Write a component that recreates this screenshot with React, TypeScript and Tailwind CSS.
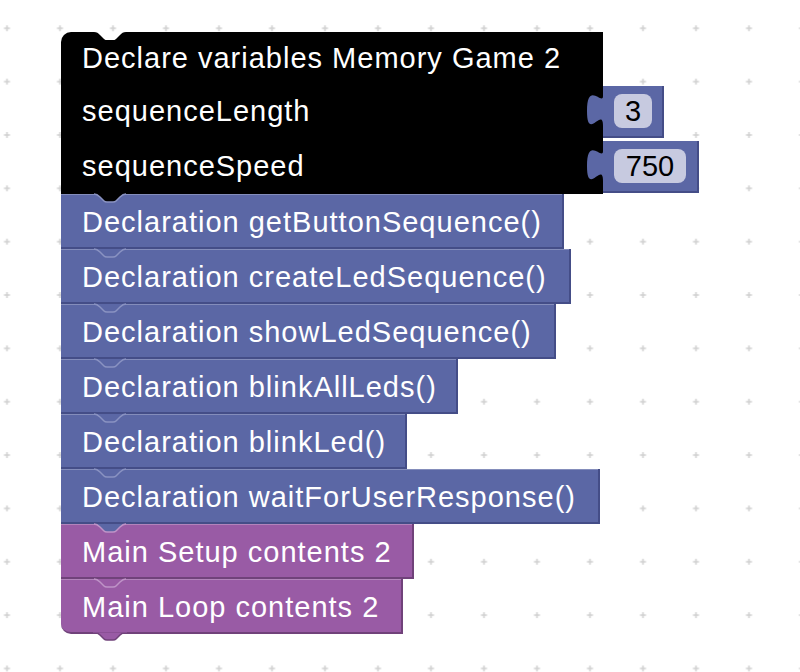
import React from "react";

type Tone = "blue" | "purple";

const TONES: Record<Tone, { box: string; fill: string; notchLine: string }> = {
  blue: {
    box: "bg-[#5b67a5] border-r-2 border-b-2 border-[#444d87]",
    fill: "fill-[#5b67a5]",
    notchLine: "stroke-[#8a93c2]",
  },
  purple: {
    box: "bg-[#995ba5] border-r-2 border-b-2 border-[#70427a]",
    fill: "fill-[#995ba5]",
    notchLine: "stroke-[#bf94c7]",
  },
};

const TAB_PATH =
  "M0,0 C3,0 4,1 6,3 L10,7 C11,8 12,8 13,8 L19,8 C20,8 21,8 22,7 L26,3 C28,1 29,0 32,0 Z";

// the previous block's tab, sitting in this block's top notch
function Notch({ fill, line }: { fill: string; line?: string }) {
  return (
    <svg
      className="absolute left-[33px] top-0 h-[8px] w-[32px] overflow-visible"
      viewBox="0 0 32 8"
    >
      <path d={TAB_PATH} className={fill} />
      {line && (
        <path
          d="M0,0 C3,0 4,1 6,3 L10,7 C11,8 12,8 13,8 L19,8 C20,8 21,8 22,7 L26,3 C28,1 29,0 32,0"
          className={line}
          fill="none"
          strokeWidth="1.5"
        />
      )}
    </svg>
  );
}

function ValueBlock({ value, width, field, top }: { value: string; width: string; field: string; top: string }) {
  return (
    <div
      className={`relative flex h-[52px] items-center self-start pl-[11px] ${top} ${width} ${TONES.blue.box}`}
    >
      <svg
        className="absolute right-full top-[10px] h-[30px] w-[16px] overflow-visible"
        viewBox="0 0 16 30"
      >
        <path
          d="M16,30 c0,-20 -16,16 -16,-15 s16,-5 16,-15 Z"
          className="fill-[#5b67a5]"
        />
      </svg>
      <div
        className={`flex h-[34px] items-center justify-center rounded-[8px] bg-[#c7cae0] text-black tracking-normal ${field}`}
      >
        {value}
      </div>
    </div>
  );
}

const blocks: { label: string; tone: Tone; width: string }[] = [
  { label: "Declaration getButtonSequence()", tone: "blue", width: "w-[503px]" },
  { label: "Declaration createLedSequence()", tone: "blue", width: "w-[510px]" },
  { label: "Declaration showLedSequence()", tone: "blue", width: "w-[495px]" },
  { label: "Declaration blinkAllLeds()", tone: "blue", width: "w-[397px]" },
  { label: "Declaration blinkLed()", tone: "blue", width: "w-[346px]" },
  { label: "Declaration waitForUserResponse()", tone: "blue", width: "w-[539px]" },
  { label: "Main Setup contents 2", tone: "purple", width: "w-[353px]" },
  { label: "Main Loop contents 2", tone: "purple", width: "w-[342px]" },
];

export default function App() {
  return (
    <div className="relative h-[672px] w-[800px] overflow-hidden bg-white font-['Liberation_Sans',Arial,sans-serif] text-[29px] leading-none tracking-[1px]">
      <svg className="absolute inset-0 h-full w-full">
        <defs>
          <pattern id="grid" x="-19.5" y="1.6" width="53" height="53.35" patternUnits="userSpaceOnUse">
            <path d="M23.5,26.7 h6 M26.5,23.7 v6" stroke="#cfcfcf" strokeWidth="1.5" />
          </pattern>
        </defs>
        <rect width="100%" height="100%" fill="url(#grid)" />
      </svg>

      <div className="relative flex flex-col items-start pl-[61px] pt-[32px] text-white">
        {/* variables block */}
        <div className="relative flex flex-col">
          <div className="relative flex h-[52px] w-[542px] items-center rounded-tl-[10px] bg-black pl-[21px]">
            <Notch fill="fill-white" />
            Declare variables Memory Game 2
          </div>
          <div className="flex h-[54px]">
            <div className="flex h-full w-[542px] items-center bg-black pl-[21px]">sequenceLength</div>
            <ValueBlock value="3" width="w-[61px]" field="w-[38px]" top="mt-[2px] h-[51px]" />
          </div>
          <div className="flex h-[56px]">
            <div className="flex h-full w-[542px] items-center bg-black pl-[21px]">sequenceSpeed</div>
            <ValueBlock value="750" width="w-[96px]" field="w-[72px]" top="mt-[3px]" />
          </div>
        </div>

        {blocks.map((b, i) => {
          const tone = TONES[b.tone];
          const prevFill = i === 0 ? "fill-black" : TONES[blocks[i - 1].tone].fill;
          const last = i === blocks.length - 1;
          return (
            <div
              key={b.label}
              className={`relative flex h-[55px] items-center pl-[21px] pt-[3px] ${b.width} ${tone.box} ${
                last ? "rounded-bl-[10px]" : ""
              }`}
            >
              <div className="absolute inset-x-0 top-0 h-px bg-white/25" />
              <Notch fill={prevFill} line={tone.notchLine} />
              {b.label}
              {last && (
                <svg
                  className="absolute left-[33px] top-full h-[8px] w-[32px] overflow-visible"
                  viewBox="0 0 32 8"
                >
                  <path d={TAB_PATH} className="fill-[#995ba5] stroke-[#70427a]" strokeWidth="1.5" />
                  <rect x="-1" y="-2" width="34" height="2.5" className="fill-[#995ba5]" />
                </svg>
              )}
            </div>
          );
        })}
      </div>
    </div>
  );
}
